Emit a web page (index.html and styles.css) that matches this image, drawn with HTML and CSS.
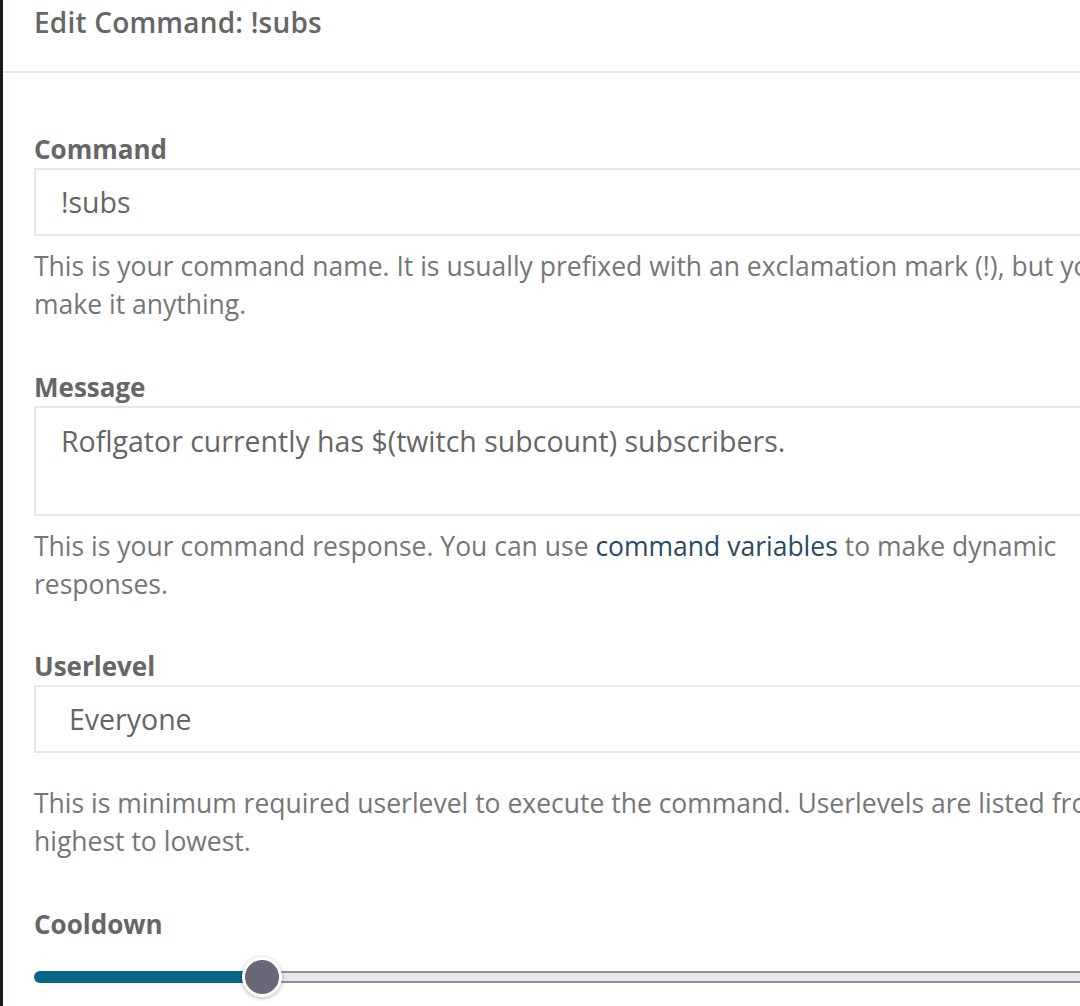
FILE: index.html
```html
<!DOCTYPE html>
<html>
<head>
<meta charset="utf-8">
<link rel="stylesheet" href="styles.css">
</head>
<body>
<div class="page">
  <div class="modal">
    <div class="modal-header">
      <h2 class="title">Edit Command: !subs</h2>
    </div>
    <div class="modal-body">
      <div class="group">
        <label class="label">Command</label>
        <div class="input">!subs</div>
        <p class="help help-wide">This is your command name. It is usually prefixed with an exclamation mark (!), but you can make it anything.</p>
      </div>
      <div class="group">
        <label class="label">Message</label>
        <div class="input textarea">Roflgator currently has $(twitch subcount) subscribers.</div>
        <p class="help help-narrow">This is your command response. You can use <a class="link">command variables</a> to make dynamic responses.</p>
      </div>
      <div class="group">
        <label class="label">Userlevel</label>
        <div class="input select">Everyone</div>
        <p class="help help-spaced">This is minimum required userlevel to execute the command. Userlevels are listed from highest to lowest.</p>
      </div>
      <div class="group">
        <label class="label">Cooldown</label>
        <div class="slider">
          <div class="track-fill"></div>
          <div class="thumb"></div>
          <div class="track-rest"></div>
        </div>
      </div>
    </div>
  </div>
</div>
</body>
</html>
```
FILE: styles.css
```css
html, body {
  margin: 0;
  padding: 0;
  background: #ffffff;
  overflow: hidden;
  height: 1006px;
}
.page {
  width: 1080px;
  height: 1006px;
  overflow: hidden;
  border-left: 3px solid #131b1b;
  box-sizing: border-box;
  font-family: "Open Sans", "Noto Sans", sans-serif;
}
.modal {
  width: 1160px;
}
.modal-header {
  height: 71px;
  border-bottom: 2px solid #e6e6e6;
  padding-left: 31px;
}
.title {
  margin: 0;
  font-size: 28px;
  font-weight: 600;
  letter-spacing: 0.2px;
  color: #666666;
  line-height: 44px;
}
.modal-body {
  padding: 60px 0 0 31px;
}
.group {
  margin-bottom: 47.5px;
}
.label {
  display: block;
  font-size: 26px;
  font-weight: 700;
  color: #666666;
  line-height: 32px;
  margin-bottom: 3px;
}
.input {
  border: 2px solid #e6e6e6;
  height: 64px;
  padding: 0 0 0 25px;
  font-size: 28.5px;
  color: #666666;
  line-height: 64px;
}
.textarea {
  line-height: 36px;
  padding-top: 15px;
  box-sizing: border-box;
  height: 110px;
}
.select {
  padding-left: 33px;
}
.help {
  margin: 11px 0 0 0;
  font-size: 26.5px;
  line-height: 38px;
  color: #767676;
  width: 1080px;
}
.help-wide {
  width: 1130px;
}
.help-narrow {
  width: 1040px;
}
.help-spaced {
  margin-top: 31px;
}
.link {
  color: #2a4a63;
  text-decoration: none;
}
.slider {
  display: flex;
  align-items: center;
  margin-top: 17px;
  height: 40px;
}
.track-fill {
  width: 214px;
  height: 12px;
  background: #0a6689;
  border-radius: 6px 0 0 6px;
}
.thumb {
  width: 34px;
  height: 34px;
  border-radius: 50%;
  background: #676776;
  border: 3px solid #ffffff;
  box-shadow: 0 1px 4px rgba(0,0,0,0.3);
  margin: 0 -3px 0 -6px;
  position: relative;
  z-index: 1;
}
.track-rest {
  flex: 1;
  height: 8px;
  background: #e8e7ee;
  border-top: 2px solid #8f8f94;
  border-bottom: 2px solid #8f8f94;
}
```
